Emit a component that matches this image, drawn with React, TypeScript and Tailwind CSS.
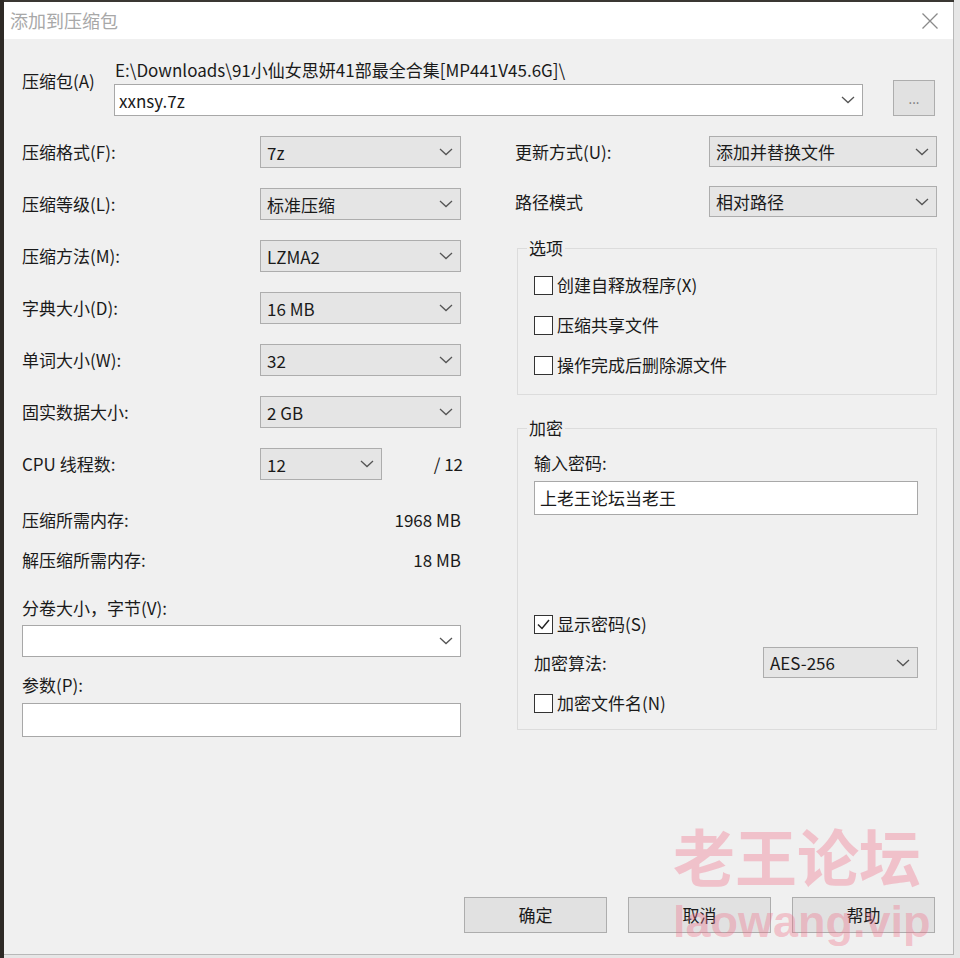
import React from 'react';

const font = "font-['Noto_Sans_CJK_SC','Noto_Sans',sans-serif]";

function Chevron() {
  return (
    <svg width="14" height="8" viewBox="0 0 14 8" className="shrink-0">
      <polyline points="1,1 7,6.5 13,1" fill="none" stroke="#555" strokeWidth="1.3" />
    </svg>
  );
}

function Combo({ value, className, white }: { value?: string; className: string; white?: boolean }) {
  return (
    <div
      className={
        'flex items-center justify-between pl-[6px] pr-[7px] border ' +
        (white ? 'bg-white border-[#a8a8a8] ' : 'bg-[#e5e5e5] border-[#adadad] ') +
        className
      }
    >
      <span className="text-[17px] leading-none text-[#1a1a1a]">{value}</span>
      <Chevron />
    </div>
  );
}

function Check({ label, checked }: { label: string; checked?: boolean }) {
  return (
    <div className="flex items-center h-[20px] gap-[4px]">
      <div className="w-[19px] h-[19px] border border-[#333] bg-white flex items-center justify-center">
        {checked && (
          <svg width="15" height="15" viewBox="0 0 15 15">
            <polyline points="2,7.5 6,11.5 13,3" fill="none" stroke="#222" strokeWidth="1.5" />
          </svg>
        )}
      </div>
      <span className="text-[17px] leading-[20px]">{label}</span>
    </div>
  );
}

const leftRows = [
  { label: '压缩格式(F):', value: '7z' },
  { label: '压缩等级(L):', value: '标准压缩' },
  { label: '压缩方法(M):', value: 'LZMA2' },
  { label: '字典大小(D):', value: '16 MB' },
  { label: '单词大小(W):', value: '32' },
  { label: '固实数据大小:', value: '2 GB' },
];

const Button = ({ text }: { text: string }) => (
  <div className="w-[143px] h-[36px] bg-[#e1e1e1] border border-[#adadad] flex items-center justify-center text-[17px]">
    {text}
  </div>
);

export default function App() {
  return (
    <div className={'relative w-[960px] h-[958px] bg-[#e6e6e6] flex overflow-hidden text-[#1a1a1a] ' + font}>
      <div className="w-[4px] h-full bg-[#2e2a26]" />
      <div className="flex flex-col">
        <div className="h-[2px] w-[950px] bg-[#3a3733]" />
        <div className="w-[950px] h-[953px] flex flex-col border-r border-b border-[#b8b8b8] bg-[#f0f0f0]">
          {/* title bar */}
          <div className="h-[37px] bg-white flex items-center justify-between pl-[6px] pr-[14px]">
            <span className="text-[18px] text-[#a8a8a8]">添加到压缩包</span>
            <svg width="18" height="18" viewBox="0 0 18 18">
              <path d="M1.5 1.5 L16.5 16.5 M16.5 1.5 L1.5 16.5" stroke="#8a8a8a" strokeWidth="1.3" />
            </svg>
          </div>

          {/* body */}
          <div className="flex-1 flex flex-col pl-[18px] pr-[17px]">
            <div className="flex pt-[21px]">
              <div className="w-[92px] pt-[11px] text-[17px] leading-[20px]">压缩包(A)</div>
              <div className="flex flex-col">
                <div className="text-[17px] leading-[20px] pl-[1px]">E:\Downloads\91小仙女思妍41部最全合集[MP441V45.6G]\</div>
                <Combo white value="xxnsy.7z" className="mt-[4px] w-[749px] h-[32px] !pl-[4px]" />
              </div>
              <div className="ml-[30px] mt-[20px] w-[42px] h-[36px] bg-[#e1e1e1] border border-[#adadad] flex items-center justify-center text-[13px] text-[#777] leading-none">
                ...
              </div>
            </div>

            <div className="flex mt-[20px]">
              {/* left column */}
              <div className="w-[439px] flex flex-col">
                <div className="flex flex-col gap-[20px]">
                  {leftRows.map((r) => (
                    <div key={r.label} className="flex items-center h-[32px]">
                      <span className="w-[238px] text-[17px]">{r.label}</span>
                      <Combo value={r.value} className="w-[201px] h-[32px]" />
                    </div>
                  ))}
                  <div className="flex items-center h-[32px]">
                    <span className="w-[238px] text-[17px]">CPU 线程数:</span>
                    <Combo value="12" className="w-[122px] h-[32px]" />
                    <span className="flex-1 text-right text-[17px] -mr-[2px]">/ 12</span>
                  </div>
                </div>
                <div className="mt-[30px] flex justify-between text-[17px] leading-[20px]">
                  <span>压缩所需内存:</span>
                  <span>1968 MB</span>
                </div>
                <div className="mt-[20px] flex justify-between text-[17px] leading-[20px]">
                  <span>解压缩所需内存:</span>
                  <span>18 MB</span>
                </div>
                <div className="mt-[28px] text-[17px] leading-[20px]">分卷大小，字节(V):</div>
                <Combo white className="mt-[7px] w-[439px] h-[32px]" />
                <div className="mt-[18px] text-[17px] leading-[20px]">参数(P):</div>
                <div className="mt-[8px] w-[439px] h-[34px] bg-white border border-[#a8a8a8]" />
              </div>

              {/* right column */}
              <div className="ml-[54px] w-[422px] flex flex-col">
                <div className="flex items-center h-[31px]">
                  <span className="w-[194px] text-[17px]">更新方式(U):</span>
                  <Combo value="添加并替换文件" className="w-[228px] h-[31px]" />
                </div>
                <div className="flex items-center h-[31px] mt-[19px]">
                  <span className="w-[194px] text-[17px]">路径模式</span>
                  <Combo value="相对路径" className="w-[228px] h-[31px]" />
                </div>

                <fieldset className="ml-[2px] mt-[21px] w-[420px] border border-[#dcdcdc] pl-[16px] pt-[17px] pb-[19px] flex flex-col gap-[20px]">
                  <legend className="-ml-[7px] px-[2px] text-[17px] leading-[20px]">选项</legend>
                  <Check label="创建自释放程序(X)" />
                  <Check label="压缩共享文件" />
                  <Check label="操作完成后删除源文件" />
                </fieldset>

                <fieldset className="ml-[2px] mt-[23px] w-[420px] border border-[#dcdcdc] pl-[16px] pr-[18px] pt-[15px] pb-[16px] flex flex-col">
                  <legend className="-ml-[7px] px-[2px] text-[17px] leading-[20px]">加密</legend>
                  <div className="text-[17px] leading-[20px]">输入密码:</div>
                  <div className="mt-[8px] h-[34px] bg-white border border-[#a8a8a8] flex items-center pl-[5px] text-[17px]">
                    上老王论坛当老王
                  </div>
                  <div className="mt-[99px]">
                    <Check label="显示密码(S)" checked />
                  </div>
                  <div className="mt-[13px] flex items-center justify-between h-[31px]">
                    <span className="text-[17px]">加密算法:</span>
                    <Combo value="AES-256" className="w-[155px] h-[31px]" />
                  </div>
                  <div className="mt-[15px]">
                    <Check label="加密文件名(N)" />
                  </div>
                </fieldset>
              </div>
            </div>

            <div className="flex-1" />
            <div className="flex justify-end gap-[21px] pb-[21px] pr-[1px]">
              <Button text="确定" />
              <Button text="取消" />
              <Button text="帮助" />
            </div>
          </div>
        </div>
      </div>

      {/* watermark */}
      <div className="pointer-events-none absolute left-[673px] top-[815px] flex flex-col items-start">
        <span className="text-[62px] leading-[80px] font-bold text-[rgba(240,110,135,0.36)]">老王论坛</span>
        <span className="mt-[0px] text-[45px] leading-[54px] font-bold font-['Liberation_Sans',sans-serif] text-[rgba(240,110,135,0.36)]">
          laowang.vip
        </span>
      </div>
    </div>
  );
}
